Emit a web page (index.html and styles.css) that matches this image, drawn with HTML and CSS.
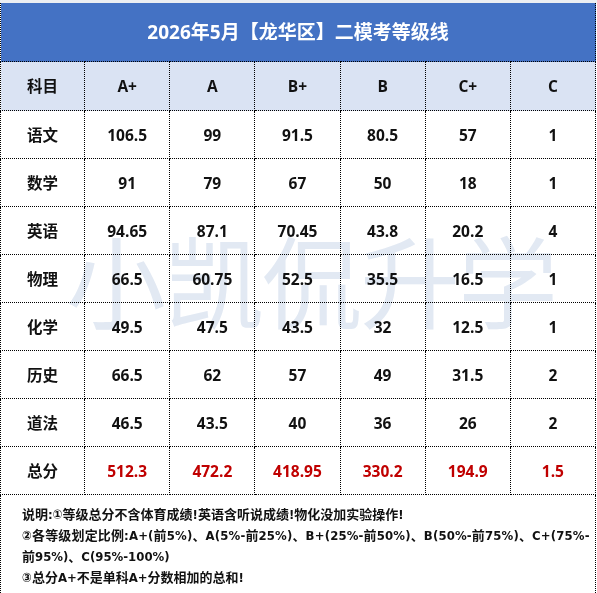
FILE: index.html
```html
<!DOCTYPE html>
<html lang="zh-CN">
<head>
<meta charset="utf-8">
<title>2026年5月【龙华区】二模考等级线</title>
<link rel="stylesheet" href="styles.css">
</head>
<body>
<div class="sheet">
  <table class="grade">
    <colgroup>
      <col class="c-first"><col><col><col><col><col><col>
    </colgroup>
    <tr><td class="title" colspan="7">2026年5月【龙华区】二模考等级线</td></tr>
    <tr class="head"><td>科目</td><td>A+</td><td>A</td><td>B+</td><td>B</td><td>C+</td><td>C</td></tr>
    <tr><td>语文</td><td>106.5</td><td>99</td><td>91.5</td><td>80.5</td><td>57</td><td>1</td></tr>
    <tr><td>数学</td><td>91</td><td>79</td><td>67</td><td>50</td><td>18</td><td>1</td></tr>
    <tr><td>英语</td><td>94.65</td><td>87.1</td><td>70.45</td><td>43.8</td><td>20.2</td><td>4</td></tr>
    <tr><td>物理</td><td>66.5</td><td>60.75</td><td>52.5</td><td>35.5</td><td>16.5</td><td>1</td></tr>
    <tr><td>化学</td><td>49.5</td><td>47.5</td><td>43.5</td><td>32</td><td>12.5</td><td>1</td></tr>
    <tr><td>历史</td><td>66.5</td><td>62</td><td>57</td><td>49</td><td>31.5</td><td>2</td></tr>
    <tr><td>道法</td><td>46.5</td><td>43.5</td><td>40</td><td>36</td><td>26</td><td>2</td></tr>
    <tr class="total"><td>总分</td><td>512.3</td><td>472.2</td><td>418.95</td><td>330.2</td><td>194.9</td><td>1.5</td></tr>
    <tr><td class="notes" colspan="7">
      <span class="line">说明:①等级总分不含体育成绩!英语含听说成绩!物化没加实验操作!</span>
      <span class="line wide">②各等级划定比例:A+(前5%)、A(5%-前25%)、B+(25%-前50%)、B(50%-前75%)、C+(75%-</span>
      <span class="line">前95%)、C(95%-100%)</span>
      <span class="line">③总分A+不是单科A+分数相加的总和!</span>
    </td></tr>
  </table>
  <div class="watermark">小凯侃升学</div>
</div>
</body>
</html>
```
FILE: styles.css
```css
html, body {
  margin: 0;
  padding: 0;
  background: #ffffff;
}
body {
  width: 597px;
  height: 593px;
  overflow: hidden;
  font-family: "Open Sans", "Noto Sans CJK SC", sans-serif;
  font-weight: 700;
  color: #111111;
}
.sheet {
  position: relative;
  width: 597px;
  padding-top: 3px;
  background: linear-gradient(#eceef2, #eceef2) top left / 100% 3px no-repeat, #ffffff;
}
.grade {
  border-collapse: collapse;
  table-layout: fixed;
  width: 596px;
}
.grade col { width: 85px; }
.grade col.c-first { width: 84px; }
.grade td {
  border: 1px dotted #000000;
  height: 47px;
  padding: 0;
  text-align: center;
  vertical-align: middle;
  font-size: 15.5px;
  line-height: 20px;
}
.grade td.title {
  height: 54px;
  background: #4472c4;
  color: #ffffff;
  font-size: 19px;
  border-top: 0;
  padding-top: 2px;
  padding-bottom: 2px;
}
.head td {
  background: #dae3f3;
  height: 48px;
}
.total td { color: #c00000; }
.total td:first-child { color: #111111; }
.grade td.notes {
  height: auto;
  text-align: left;
  font-family: "DejaVu Sans Condensed", "Open Sans", "Noto Sans CJK SC", sans-serif;
  font-size: 13px;
  line-height: 21px;
  padding: 9px 0 12px 21px;
  vertical-align: top;
}
.line {
  display: block;
  white-space: nowrap;
}
.line.wide {
  letter-spacing: 0.15px;
}
.watermark {
  position: absolute;
  left: 66px;
  top: 228px;
  font-family: "Noto Sans CJK SC", sans-serif;
  font-weight: 400;
  font-size: 100px;
  letter-spacing: -2px;
  line-height: 100px;
  color: #e2e9f3;
  mix-blend-mode: multiply;
  pointer-events: none;
  white-space: nowrap;
}
```
